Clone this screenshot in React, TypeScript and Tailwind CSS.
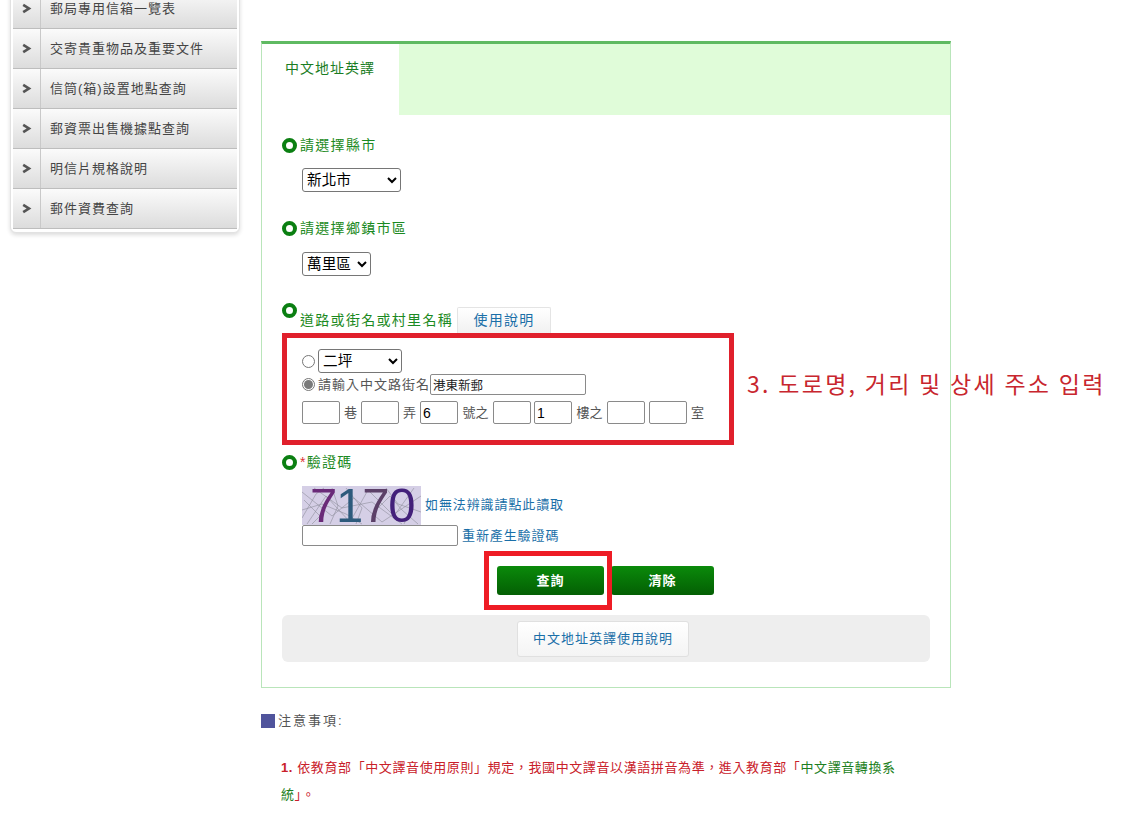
import React from "react";

const cjk = "font-['Liberation_Sans','Noto_Sans_CJK_TC',sans-serif]";

const side = ["郵局專用信箱一覽表", "交寄貴重物品及重要文件", "信筒(箱)設置地點查詢", "郵資票出售機據點查詢", "明信片規格說明", "郵件資費查詢"];

function Dot({ className = "" }: { className?: string }) {
  return <span className={"inline-block w-[15px] h-[15px] rounded-full border-[4px] border-[#0b7f12] bg-white shrink-0 " + className} />;
}

function Heading({ children }: { children: React.ReactNode }) {
  return (
    <div className="flex items-center h-[20px] gap-[3px] text-[14px] tracking-[1.3px] text-[#1b8a22] whitespace-nowrap">
      <Dot />
      <span>{children}</span>
    </div>
  );
}

function Box({ value = "" }: { value?: string }) {
  return (
    <input
      readOnly
      value={value}
      className="w-[38px] h-[23px] border border-[#8a8a8a] rounded-[2px] bg-white px-[2px] text-[14px] text-black outline-none"
    />
  );
}

function Sel({ w, label }: { w: string; label: string }) {
  return (
    <select className={w + " h-[24px] border border-[#767676] rounded-[3px] bg-white text-[14.67px] text-black pl-0 block " + cjk}>
      <option>{label}</option>
    </select>
  );
}

function Captcha() {
  return (
    <div className="w-[119px] h-[39px] shrink-0">
      <svg width="119" height="39" viewBox="0 0 119 39">
        <rect width="119" height="39" fill="#d5cfe6" />
        <g stroke="#8f8f9c" strokeWidth="0.6" fill="none">
          <path d="M0 6 L30 30 L52 12 L80 36 L119 10" />
          <path d="M5 38 L24 10 L48 36 L66 4 L92 30 L112 2" />
          <path d="M12 2 L40 22 L70 16 L100 38" />
          <path d="M0 24 L20 18 L44 28 L60 38" />
          <path d="M84 2 L96 18 L119 26" />
          <path d="M30 2 L36 20 L28 38" />
          <path d="M2 14 L18 30 L10 38" />
          <path d="M44 2 L60 22 L54 38" />
          <path d="M70 28 L88 10 L100 24 L116 38" />
          <path d="M0 32 L14 8 L22 2" />
          <path d="M104 4 L110 20 L102 38" />
        </g>
        <text x="8" y="36" fontFamily="'Liberation Sans',sans-serif" fontSize="49" letterSpacing="-1.2">
          <tspan fill="#6a2a78">7</tspan>
          <tspan fill="#2d5a7c">1</tspan>
          <tspan fill="#5c4068">7</tspan>
          <tspan fill="#43207a">0</tspan>
        </text>
      </svg>
    </div>
  );
}

export default function App() {
  return (
    <div className={"relative w-[1133px] h-[819px] overflow-hidden bg-white flex items-start " + cjk}>
      <aside className="ml-[10px] mt-[-12px] w-[230px] shrink-0 rounded-b-[6px] border border-[#e2e2e2] bg-white px-[2px] pb-[3px] shadow-[0_2px_4px_rgba(0,0,0,0.14)]">
        {side.map((t) => (
          <div key={t} className="flex h-[40px] border-b border-[#bdbdbd] bg-gradient-to-b from-[#fbfbfb] to-[#dcdcdc]">
            <div className="w-[28px] border-r border-[#c9c9c9] flex items-center justify-center shrink-0">
              <svg width="11" height="11" viewBox="0 0 11 11">
                <path d="M2.2 1.8 L8 5.5 L2.2 9.2" fill="none" stroke="#555" strokeWidth="2.6" />
              </svg>
            </div>
            <div className="pl-[9px] pt-[12px] text-[13px] leading-[16px] tracking-[1px] text-[#444] whitespace-nowrap">{t}</div>
          </div>
        ))}
      </aside>

      <main className="ml-[21px] mt-[41px] w-[690px] shrink-0">
        <section className="h-[647px] border border-[#b9e5ba] border-t-[3px] border-t-[#5fba62]">
          <div className="flex h-[71px] bg-[#e0fcd9]">
            <div className="w-[137px] bg-white pl-[23px] pt-[14px] text-[14px] leading-[20px] tracking-[1px] text-[#1a7d24]">中文地址英譯</div>
          </div>

          <div className="pl-[20px] pr-[20px] pt-[20px]">
            <Heading>請選擇縣市</Heading>
            <div className="pl-[20px] pt-[13px]"><Sel w="w-[99px]" label="新北市" /></div>

            <div className="mt-[26px]"><Heading>請選擇鄉鎮市區</Heading></div>
            <div className="pl-[20px] pt-[14px]"><Sel w="w-[69px]" label="萬里區" /></div>

            <div className="mt-[27px] flex items-start h-[30px]">
              <Dot />
              <span className="ml-[3px] mt-[7px] text-[14px] leading-[20px] tracking-[1.3px] text-[#1b8a22] whitespace-nowrap">道路或街名或村里名稱</span>
              <span className="ml-[4px] mt-[4px] w-[94px] h-[26px] flex items-center justify-center rounded-t-[2px] bg-gradient-to-b from-white to-[#f1f1f1] border border-b-0 border-[#e4e4e4] text-[14px] tracking-[1.3px] text-[#1a6fa8]">使用說明</span>
            </div>

            <div className="w-[452px] h-[112px] border-[5px] border-[#e0202c] pl-[15px] pt-[11px] text-[13px] leading-[16px] text-[#555]">
              <div className="flex items-center gap-[3px] h-[24px]">
                <span className="w-[13px] h-[13px] rounded-full border border-[#767676] bg-white" />
                <Sel w="w-[84px]" label="二坪" />
              </div>
              <div className="flex items-center h-[21px] mt-[1px]">
                <span className="w-[13px] h-[13px] rounded-full border border-[#767676] bg-white flex items-center justify-center mr-[3px]">
                  <span className="w-[9px] h-[9px] rounded-full bg-[#7a7a7a]" />
                </span>
                <span className="w-[112px] tracking-[1px] whitespace-nowrap">請輸入中文路街名</span>
                <input readOnly value="港東新郵" className="w-[156px] h-[21px] border border-[#8a8a8a] rounded-[2px] px-[2px] text-[12.5px] text-[#222] outline-none" />
              </div>
              <div className="flex items-center h-[23px] mt-[6px] whitespace-nowrap">
                <Box />
                <span className="w-[21px] text-center">巷</span>
                <Box />
                <span className="w-[21px] text-center">弄</span>
                <Box value="6" />
                <span className="w-[35px] text-center">號之</span>
                <Box />
                <span className="w-[3px]" />
                <Box value="1" />
                <span className="w-[35px] text-center">樓之</span>
                <Box />
                <span className="w-[4px]" />
                <Box />
                <span className="ml-[4px]">室</span>
              </div>
            </div>

            <div className="mt-[7px] flex items-center h-[20px] gap-[3px] text-[14px] tracking-[1.3px] text-[#1b8a22]">
              <Dot />
              <span><span className="text-[#d33]">*</span>驗證碼</span>
            </div>

            <div className="pl-[20px] mt-[14px] flex items-center h-[39px]">
              <Captcha />
              <span className="ml-[4px] mb-[2px] text-[13px] leading-[16px] text-[#1a6fa8] tracking-[0.9px] whitespace-nowrap">如無法辨識請點此讀取</span>
            </div>
            <div className="pl-[20px] flex items-center h-[21px]">
              <input readOnly className="w-[156px] h-[21px] border border-[#8a8a8a] rounded-[2px] outline-none" />
              <span className="ml-[4px] text-[13px] leading-[16px] text-[#1a6fa8] tracking-[0.9px] whitespace-nowrap">重新產生驗證碼</span>
            </div>

            <div className="relative mt-[20px] ml-[215px] flex gap-[7px] h-[30px]">
              <div className="w-[107px] h-[29px] rounded-[3px] bg-gradient-to-b from-[#0b8a0b] to-[#045f04] flex items-center justify-center text-[13px] font-bold tracking-[1px] text-white">查詢</div>
              <div className="w-[103px] h-[29px] rounded-[3px] bg-gradient-to-b from-[#0b8a0b] to-[#045f04] flex items-center justify-center text-[13px] font-bold tracking-[1px] text-white">清除</div>
              <div className="absolute left-[-13px] top-[-15px] w-[128px] h-[59px] border-[5px] border-[#ee1c25]" />
            </div>

            <div className="mt-[19px] h-[47px] rounded-[6px] bg-[#eeeeee] flex items-center pl-[235px]">
              <div className="w-[172px] h-[36px] rounded-[3px] bg-gradient-to-b from-white to-[#f4f4f4] border border-[#e0e0e0] flex items-center justify-center text-[13px] tracking-[1px] text-[#1a6fa8]">中文地址英譯使用說明</div>
            </div>
          </div>
        </section>

        <div className="mt-[25px] flex items-center h-[16px] text-[13px] tracking-[2px] text-[#555]">
          <span className="w-[14px] h-[14px] bg-[#50549c] mr-[3px]" />
          <span>注意事項:</span>
        </div>
        <p className="mt-[25px] ml-[20px] w-[622px] text-[13px] leading-[27px] tracking-[0.6px] text-[#c9202a]">
          <b className="text-[13px]">1.</b> 依教育部「中文譯音使用原則」規定，我國中文譯音以漢語拼音為準，進入教育部「<span className="text-[#1c7f22]">中文譯音轉換系統</span>」。
        </p>
      </main>

      <div className="absolute left-[747px] top-[367px] text-[23px] leading-[32px] tracking-[2.3px] text-[#c8262e] whitespace-nowrap font-['Noto_Sans_CJK_KR',sans-serif]">3. 도로명, 거리 및 상세 주소 입력</div>
    </div>
  );
}
